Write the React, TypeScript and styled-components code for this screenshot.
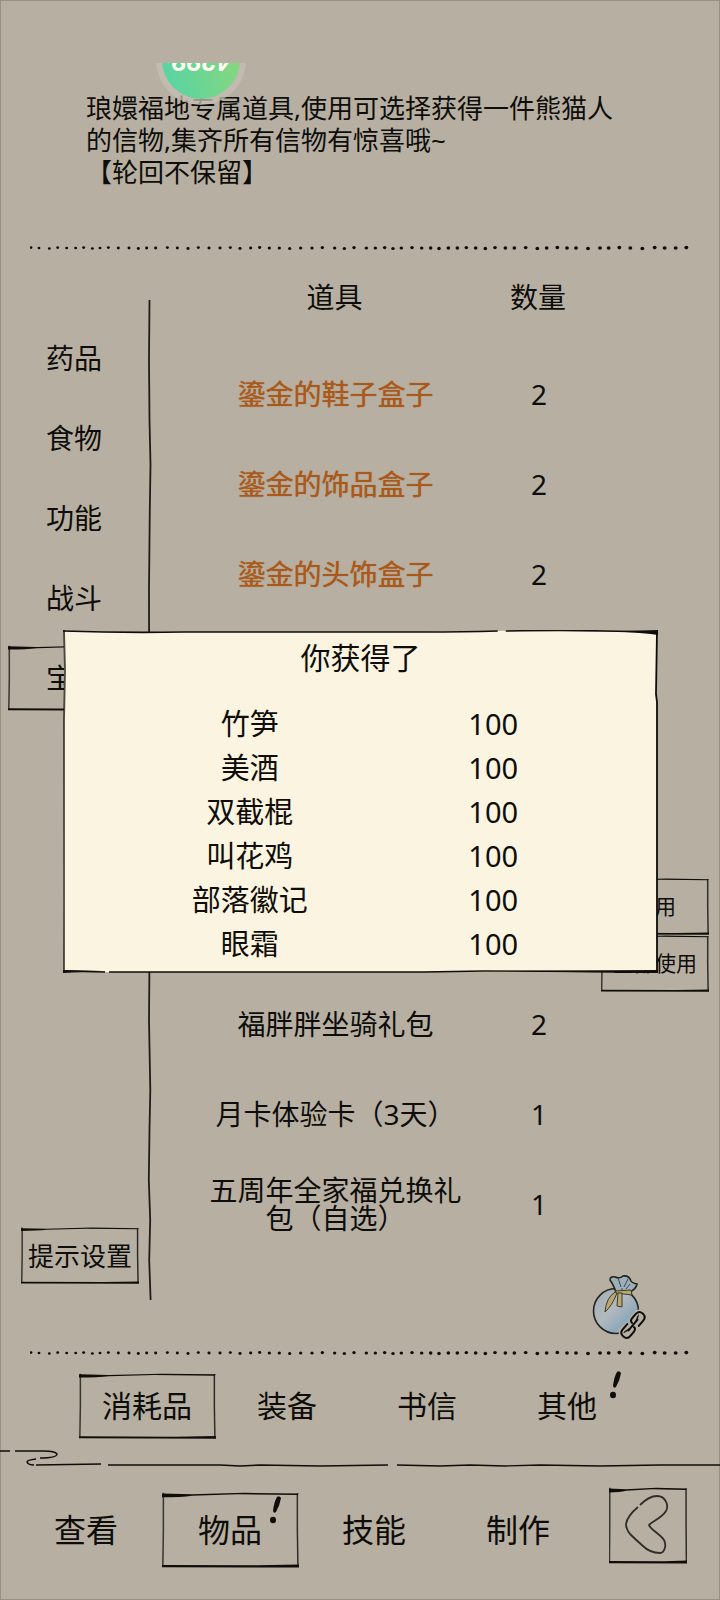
import React from "react";
import styled, { createGlobalStyle } from "styled-components";

const INK = "#0e0d0a";
const PAPER = "#b7b0a2";

const GlobalStyle = createGlobalStyle`
  * { box-sizing: border-box; }
  body {
    margin: 0;
    background: ${PAPER};
    color: ${INK};
    font-family: "Noto Sans", "Noto Sans CJK SC", sans-serif;
  }
  button {
    margin: 0;
    padding: 0;
    border: 0;
    background: none;
    color: inherit;
    font: inherit;
    cursor: pointer;
  }
`;

const Page = styled.div`
  position: relative;
  display: flex;
  flex-direction: column;
  min-height: 100vh;
  box-shadow: inset 0 0 0 1px #979183;
`;

const Description = styled.header`
  padding: 92px 100px 56px 86px;
`;

const DescriptionText = styled.p`
  margin: 0;
  font-size: 26px;
  line-height: 32px;
  white-space: pre-line;
`;

const BubbleClip = styled.div`
  position: absolute;
  top: 63px;
  left: 156px;
  width: 90px;
  height: 42px;
  overflow: hidden;
`;

const Bubble = styled.div`
  position: absolute;
  left: 0;
  bottom: 0;
  display: flex;
  align-items: center;
  justify-content: center;
  width: 90px;
  height: 90px;
  padding-bottom: 4px;
  border: 6px solid rgba(198, 192, 180, 0.75);
  border-radius: 50%;
  background: linear-gradient(70deg, #86d77f 15%, #5cd4a0 85%) padding-box;
  color: #fffdf4;
  font: 900 26px/26px Lato, sans-serif;
  transform: rotate(180deg);
`;

const DotRow = styled.svg`
  display: block;
  width: calc(100% - 60px);
  height: 8px;
  margin: 0 30px;
`;

const Main = styled.main`
  display: flex;
  flex: 1;
`;

const Side = styled.nav`
  display: flex;
  flex-direction: column;
  align-items: center;
  width: 148px;
  padding: 73px 0 65px;
`;

const SideItem = styled.button`
  position: relative;
  width: 132px;
  height: 66px;
  margin-bottom: 14px;
  padding-bottom: 2px;
  font-size: 28px;
`;

const HintButton = styled.button`
  position: relative;
  width: 118px;
  height: 57px;
  margin-top: auto;
  margin-left: 12px;
  padding-bottom: 2px;
  font-size: 26px;
`;

const Divider = styled.svg`
  flex: none;
  align-self: stretch;
  width: 5px;
  height: auto;
  margin: 48px 0 49px -1px;
`;

const Inventory = styled.section`
  display: flex;
  flex: 1;
  flex-direction: column;
  padding: 0 11px 8px 50px;
`;

const ItemTable = styled.table`
  width: 100%;
  border-collapse: collapse;
  table-layout: fixed;
  font-size: 28px;
  line-height: 28px;
  text-align: center;
`;

const HeadCell = styled.th<{ $width?: number }>`
  width: ${(p) => (p.$width ? `${p.$width}px` : "auto")};
  height: 98px;
  padding: 0 ${(p) => (p.$width ? 4 : 12)}px 8px 0;
  font-weight: 400;
`;

const ItemRow = styled.tr<{ $rows?: number }>`
  height: ${(p) => 90 * (p.$rows ?? 1)}px;
`;

const NameCell = styled.td<{ $rare?: boolean }>`
  padding: 0 10px 2px 0;
  color: ${(p) => (p.$rare ? "#a9591c" : INK)};
  text-shadow: ${(p) => (p.$rare ? "0 0 1px currentColor" : "none")};
`;

const Cell = styled.td`
  padding: 0 2px 2px 0;
`;

const ActionCell = styled.td`
  padding: 0;
`;

const Actions = styled.div`
  display: flex;
  flex-direction: column;
  margin: -12px 0;
`;

const ActionButton = styled.button`
  position: relative;
  height: 57px;
  padding-bottom: 2px;
  font-size: 21px;
`;

const BagButton = styled.button`
  align-self: flex-end;
  width: 56px;
  height: 66px;
  margin: 25px 61px 0 0;
`;

const Tabs = styled.nav`
  display: grid;
  grid-template-columns: repeat(4, 1fr);
  justify-items: center;
  padding: 16px 83px 0 77px;
`;

const Tab = styled.button<{ $large?: boolean }>`
  position: relative;
  width: 137px;
  height: ${(p) => (p.$large ? 76 : 66)}px;
  margin-top: ${(p) => (p.$large ? 5 : 0)}px;
  padding-bottom: 5px;
  font-size: ${(p) => (p.$large ? 32 : 30)}px;
`;

const Alert = styled.svg<{ $outside?: boolean }>`
  position: absolute;
  top: ${(p) => (p.$outside ? -2 : 4)}px;
  right: ${(p) => (p.$outside ? 14 : 17)}px;
  width: 12px;
  height: 28px;
`;

const CloudLine = styled.svg`
  display: block;
  width: 100%;
  height: 24px;
  margin-top: 6px;
`;

const BottomNav = styled.nav`
  display: grid;
  grid-template-columns: repeat(4, 36fr) 29fr;
  justify-items: center;
  align-items: start;
  padding: 18px 14px 32px;
`;

const BackButton = styled.button`
  position: relative;
  width: 78px;
  height: 77px;
`;

const BackGlyph = styled.svg`
  display: block;
  width: 100%;
  height: 100%;
`;

const Overlay = styled.div`
  position: absolute;
  inset: 0;
  display: flex;
  align-items: center;
  justify-content: center;
  padding: 2px 62px 0 63px;
`;

const Dialog = styled.section`
  position: relative;
  width: 100%;
  padding: 9px 43px 7px 65px;
`;

const DialogTitle = styled.h2`
  position: relative;
  margin: 0 0 25px;
  padding-right: 22px;
  font-size: 30px;
  font-weight: 400;
  line-height: 38px;
  text-align: center;
`;

const RewardTable = styled.table`
  position: relative;
  width: 100%;
  border-collapse: collapse;
  table-layout: fixed;
  font-size: 29px;
  line-height: 44px;
  text-align: center;
`;

const RewardCell = styled.td`
  padding: 0;
`;

const FrameSvg = styled.svg`
  position: absolute;
  inset: 0;
  width: 100%;
  height: 100%;
  pointer-events: none;
`;

function SketchFrame() {
  return (
    <FrameSvg viewBox="0 0 100 100" preserveAspectRatio="none" aria-hidden="true">
      <path d="M0 2 L0 7 Q14 7 22 5 L55 3 L99 4 L100 2 L60 1 L22 3 Z" fill={INK} />
      <path
        d="M1 1 L1 50 L0.6 98"
        fill="none"
        stroke={INK}
        strokeOpacity="0.75"
        strokeWidth="1.5"
        vectorEffect="non-scaling-stroke"
      />
      <path
        d="M98.8 2 L98.8 50 L99.2 98"
        fill="none"
        stroke={INK}
        strokeOpacity="0.8"
        strokeWidth="1.5"
        vectorEffect="non-scaling-stroke"
      />
      <path d="M0 96 L70 96.5 L100 95.5 L100 99.5 L0 99 Z" fill={INK} />
    </FrameSvg>
  );
}

function DialogFrame() {
  return (
    <FrameSvg viewBox="0 0 594 342" preserveAspectRatio="none" aria-hidden="true">
      <path
        d="M1 1 Q60 3 120 2 L360 2 Q440 0 500 1 L593 2 L593 64 L593 341 L1 341 L0 270 L1 90 Z"
        fill="#fbf4e0"
      />
      <g fill="none" stroke={INK}>
        <path
          d="M0 1 Q60 3 120 2 L360 2 Q400 2 434 1 M442 1 Q500 0 540 1 L594 2"
          strokeWidth="1.6"
        />
        <path d="M1 0 L2 40 L1 90 L1 270 L1 342" strokeWidth="1.8" strokeOpacity="0.75" />
        <path d="M593 1 L592 64 L593 72 L593 160 L593 341" strokeWidth="1.8" />
        <path d="M0 340 L42 341 M46 341 L120 341 L360 341 L420 340 L594 341" strokeWidth="1.4" />
      </g>
      <path d="M560 1 L594 0 L594 5 Q580 3 560 2 Z M0 339 L40 340 L0 342 Z" fill={INK} />
      <path d="M420 340 L594 339 L594 342 L500 341 Z" fill={INK} />
    </FrameSvg>
  );
}

const DOTS = [
  93, 117, 148, 173, 200, 227, 251, 277, 300, 325, 355, 387, 415, 440, 467, 502, 532, 564, 595,
  627, 660, 691, 720, 752, 779, 808, 838, 869, 902, 936, 967, 1004, 1033, 1062, 1099, 1126, 1154,
  1179, 1204, 1236, 1265, 1292, 1317, 1345, 1372, 1399, 1427, 1456, 1485, 1516, 1543, 1577, 1612,
  1640, 1672, 1701, 1728, 1764, 1800, 1826, 1858, 1891, 1927, 1964, 1994, 2027, 2059,
];

function Dots() {
  return (
    <DotRow viewBox="0 0 660 8" preserveAspectRatio="none" aria-hidden="true">
      {DOTS.map((x, i) => (
        <ellipse
          key={x}
          cx={x / 3 - 30}
          cy={4 + (i % 5 === 2 ? 0.5 : i % 3 === 0 ? -0.4 : 0)}
          rx={1.4 + i * 0.009}
          ry={1.3 + i * 0.008}
          fill={INK}
        />
      ))}
    </DotRow>
  );
}

function AlertMark({ outside }: { outside?: boolean }) {
  return (
    <Alert $outside={outside} viewBox="0 0 12 28" aria-hidden="true">
      <path d="M7 1 Q9 -1 11 2 Q10 9 6 16 Q4 18 3 15 Q4 6 7 1 Z" fill={INK} />
      <ellipse cx="3" cy="24" rx="3" ry="3.2" fill={INK} />
    </Alert>
  );
}

function Bag() {
  return (
    <svg viewBox="0 0 56 66" width="56" height="66" aria-hidden="true">
      <defs>
        <linearGradient id="bag" x1="0" y1="0" x2="1" y2="1">
          <stop offset="0" stopColor="#a3adb3" />
          <stop offset="0.45" stopColor="#b0b9be" />
          <stop offset="0.7" stopColor="#8fa9ba" />
          <stop offset="1" stopColor="#b5bdbf" />
        </linearGradient>
      </defs>
      <circle cx="24" cy="36" r="22.5" fill="url(#bag)" stroke="#22231f" strokeWidth="1.6" />
      <path
        d="M24 17 Q21 9 18 5 Q18 1 23 2 Q28 4 31 1 Q37 0 39 6 Q40 8 45 9 Q44 14 38 17 Z"
        fill="#9db0ba"
        stroke="#22231f"
        strokeWidth="1.6"
      />
      <path d="M26 3 L29 12 M36 4 L32 12 M30 13 L30 17 M38 9 L34 14" stroke="#3d474b" fill="none" />
      <g fill="#b9a874" stroke="#3f3a28" strokeWidth="1">
        <path d="M23 16 L39 15 L40 20 L24 18 Z" />
        <path d="M23 17 Q14 23 13 37 Q20 31 25 18 Z" />
        <path d="M26 18 L25 31 L30 32 L30 18 Z" />
      </g>
      <g transform="rotate(-50 41 50)" fill="none" strokeLinecap="round">
        <g stroke={PAPER} strokeWidth="5">
          <rect x="26" y="45" width="13" height="10" rx="4" />
          <rect x="43" y="45" width="13" height="10" rx="4" />
        </g>
        <g stroke={INK} strokeWidth="2">
          <path d="M38 45 L31 45 Q26 45 26 50 Q26 55 31 55 L36 55 Q40 55 40 52" />
          <path d="M44 55 L51 55 Q56 55 56 50 Q56 45 51 45 L46 45 Q42 45 42 48" />
          <path d="M34 50 L48 50" />
        </g>
      </g>
    </svg>
  );
}

const DESCRIPTION =
  "琅嬛福地专属道具,使用可选择获得一件熊猫人的信物,集齐所有信物有惊喜哦~\n【轮回不保留】";
const CATEGORIES = ["药品", "食物", "功能", "战斗", "宝物"];
const RARE_ITEMS = ["鎏金的鞋子盒子", "鎏金的饰品盒子", "鎏金的头饰盒子"];
const ITEMS: [string, number][] = [
  ["福胖胖坐骑礼包", 2],
  ["月卡体验卡（3天）", 1],
  ["五周年全家福兑换礼包（自选）", 1],
];
const REWARDS = ["竹笋", "美酒", "双截棍", "叫花鸡", "部落徽记", "眼霜"];
const TABS = ["消耗品", "装备", "书信", "其他"];
const NAV = ["查看", "物品", "技能", "制作"];

export default function App() {
  return (
    <Page>
      <GlobalStyle />
      <Description>
        <DescriptionText>{DESCRIPTION}</DescriptionText>
        <BubbleClip>
          <Bubble>4299</Bubble>
        </BubbleClip>
      </Description>
      <Dots />
      <Main>
        <Side>
          {CATEGORIES.map((name) => (
            <SideItem key={name} type="button">
              {name === "宝物" && <SketchFrame />}
              {name}
            </SideItem>
          ))}
          <HintButton type="button">
            <SketchFrame />
            提示设置
          </HintButton>
        </Side>
        <Divider viewBox="0 0 5 1000" preserveAspectRatio="none" aria-hidden="true">
          <path
            d="M2.5 0 L2 60 L2.5 120 L3.5 165 L2.8 210 L2 290 L2.5 660 L2 720 L3.3 790 L2.5 830 L1.8 880 L3.2 920 L2.2 960 L3.6 1000"
            fill="none"
            stroke={INK}
            strokeWidth="1.8"
            strokeOpacity="0.9"
          />
        </Divider>
        <Inventory>
          <ItemTable>
            <thead>
              <tr>
                <HeadCell scope="col">道具</HeadCell>
                <HeadCell scope="col" $width={122}>
                  数量
                </HeadCell>
                <HeadCell as="td" $width={108} />
              </tr>
            </thead>
            <tbody>
              {RARE_ITEMS.map((name) => (
                <ItemRow key={name}>
                  <NameCell $rare>{name}</NameCell>
                  <Cell>2</Cell>
                  <Cell />
                </ItemRow>
              ))}
              <ItemRow $rows={3}>
                <Cell colSpan={3} />
              </ItemRow>
              <ItemRow>
                <Cell colSpan={2} />
                <ActionCell>
                  <Actions>
                    <ActionButton type="button">
                      <SketchFrame />
                      使用
                    </ActionButton>
                    <ActionButton type="button">
                      <SketchFrame />
                      全部使用
                    </ActionButton>
                  </Actions>
                </ActionCell>
              </ItemRow>
              {ITEMS.map(([name, count]) => (
                <ItemRow key={name}>
                  <NameCell>{name}</NameCell>
                  <Cell>{count}</Cell>
                  <Cell />
                </ItemRow>
              ))}
            </tbody>
          </ItemTable>
          <BagButton type="button" aria-label="锦囊">
            <Bag />
          </BagButton>
        </Inventory>
      </Main>
      <Dots />
      <Tabs>
        {TABS.map((name, i) => (
          <Tab key={name} type="button">
            {i === 0 && <SketchFrame />}
            {name}
            {i === 3 && <AlertMark outside />}
          </Tab>
        ))}
      </Tabs>
      <CloudLine viewBox="0 0 720 24" preserveAspectRatio="none" aria-hidden="true">
        <g fill="none" stroke={INK} strokeWidth="1.4">
          <path d="M0 6 L10 6 M15 6 L44 6 Q55 6 57 9 Q57 13 40 13 M36 14 Q27 15 27 17 Q28 20 34 20" />
          <path d="M36 20 L101 19 M108 20 L220 20 L240 21 L260 20 L320 21 L388 20 M397 20 L440 21 L470 20 L505 21 L540 20 L600 21 L660 20 L720 20" />
        </g>
      </CloudLine>
      <BottomNav>
        {NAV.map((name, i) => (
          <Tab key={name} type="button" $large>
            {i === 1 && <SketchFrame />}
            {name}
            {i === 1 && <AlertMark />}
          </Tab>
        ))}
        <BackButton type="button" aria-label="返回">
          <SketchFrame />
          <BackGlyph viewBox="0 0 78 77" aria-hidden="true">
            <path
              d="M31 18 C38 11 43 9 48 9 C57 9 60 19 57 24 C53 31 42 35 40 38 C41 42 52 48 55 53 C58 59 55 66 51 66 C46 66 39 64 34 59 C27 53 24 50 21 47 C18 43 17 40 17 37 C18 31 23 25 29 20"
              fill="none"
              stroke={INK}
              strokeOpacity="0.8"
              strokeWidth="1.8"
            />
          </BackGlyph>
        </BackButton>
      </BottomNav>
      <Overlay>
        <Dialog role="dialog" aria-labelledby="reward-title">
          <DialogFrame />
          <DialogTitle id="reward-title">你获得了</DialogTitle>
          <RewardTable>
            <tbody>
              {REWARDS.map((name) => (
                <tr key={name}>
                  <RewardCell>{name}</RewardCell>
                  <RewardCell>100</RewardCell>
                </tr>
              ))}
            </tbody>
          </RewardTable>
        </Dialog>
      </Overlay>
    </Page>
  );
}
